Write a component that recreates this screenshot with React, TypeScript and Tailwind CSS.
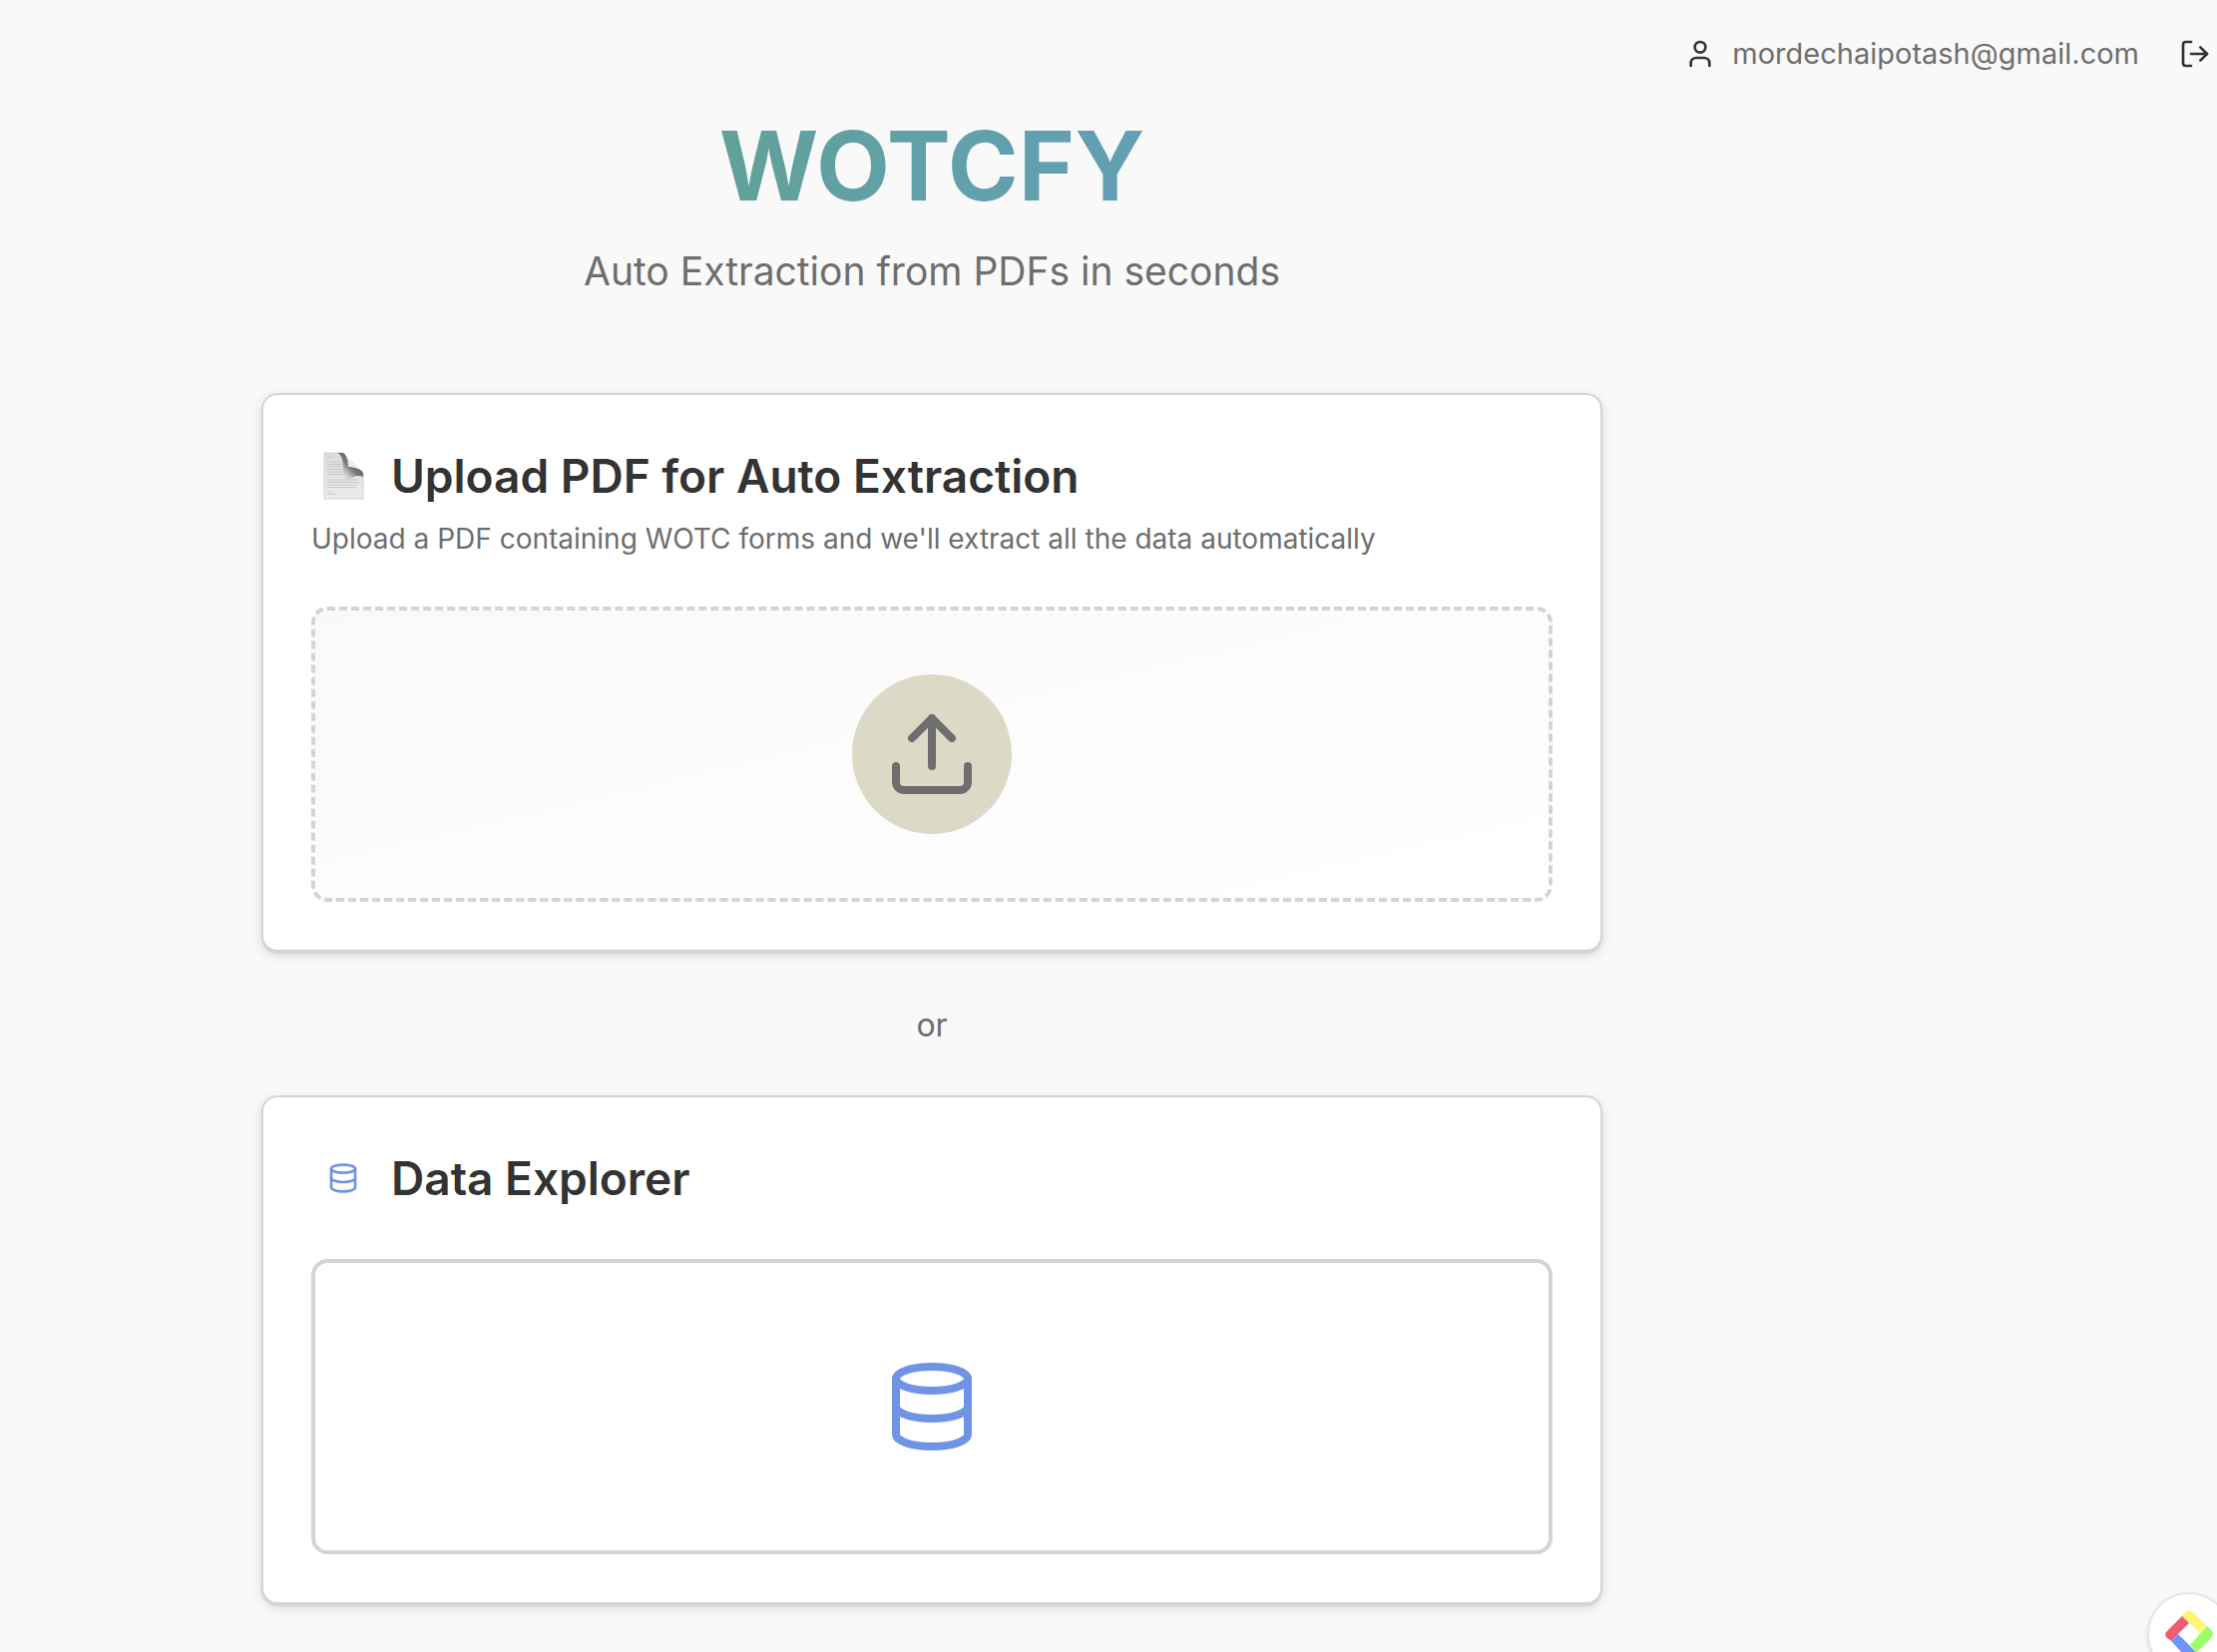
import type { ReactNode } from "react";
import { Database, LogOut, Upload, User } from "lucide-react";

function PageGlyph() {
  return (
    <svg width="48" height="48" viewBox="0 0 48 48" aria-hidden="true">
      <defs>
        <linearGradient id="sheet" x1="0" y1="0" x2="0" y2="1">
          <stop offset="0" stopColor="#dcdcdc" />
          <stop offset="1" stopColor="#ececec" />
        </linearGradient>
        <linearGradient id="shade" x1="1" y1="0" x2="0.1" y2="0.9">
          <stop offset="0.3" stopColor="#555555" />
          <stop offset="0.6" stopColor="#808080" />
          <stop offset="1" stopColor="#dcdcdc" stopOpacity="0" />
        </linearGradient>
        <linearGradient id="curl" x1="0" y1="1" x2="0.6" y2="0.4">
          <stop offset="0" stopColor="#cfcfcf" />
          <stop offset="1" stopColor="#f6f6f6" />
        </linearGradient>
      </defs>
      <path d="M5 1h18c4 1 6 5 6 14 8 0 14 3 15 7v25H5z" fill="url(#sheet)" stroke="#d2d2d2" />
      <path
        d="M8 5h7M8 10h15M8 12.500h15M8 15h15M8 17.500h16M8 20h16M8 22.500h17M8 28h31M8 30.500h31M8 33h31M8 35.500h29M8 40h6M8 42.500h10"
        stroke="#a8a8a8"
        strokeOpacity="0.45"
        fill="none"
      />
      <path d="M18 1h6c3 2 5 8 5 14 8 0 14 2 15 7v3c-5-2-10-1-14 3-5 1-6-3-6-10C24 9 23 3 18 1z" fill="url(#shade)" />
      <path d="M25 1.500c4 2 5 8 4 13.500 6 0 11 1 15 6C39 14 31 7 25 1.500z" fill="url(#curl)" />
    </svg>
  );
}

function Card({ icon, title, description, children }: { icon: ReactNode; title: string; description?: string; children: ReactNode }) {
  return (
    <section className="w-full rounded-2xl border-2 border-[#d4d4d4] bg-white p-12 shadow-[0_4px_12px_rgba(0,0,0,0.12),0_2px_2px_rgba(0,0,0,0.08)]">
      <div className="flex items-center gap-4">
        <span className="flex size-16 shrink-0 items-center justify-center">{icon}</span>
        <h2 className="text-[46px] leading-[66px] font-semibold text-[#333333]">{title}</h2>
      </div>
      {description && <p className="mt-[10px] text-[28px] leading-10 text-[#6e6e6e]">{description}</p>}
      <div className="mt-12">{children}</div>
    </section>
  );
}

export default function App() {
  return (
    <div className="relative min-h-screen overflow-hidden bg-[#f9f9f9] font-['Inter',sans-serif]">
      <header className="flex h-[108px] items-center justify-end gap-10 pr-[6px]">
        <div className="flex items-center gap-4">
          <User size={32} className="text-[#333333]" aria-hidden="true" />
          <span className="text-[29px] leading-10 text-[#6e6e6e]">mordechaipotash@gmail.com</span>
        </div>
        <button type="button" aria-label="Log out" className="text-[#333333]">
          <LogOut size={32} />
        </button>
      </header>

      <main className="mr-[354px] flex flex-col items-center pb-12">
        <div className="flex w-full max-w-[1344px] flex-col items-center">
          <h1 className="bg-linear-to-r from-[#61a199] to-[#639fb6] bg-clip-text text-[96px] leading-[116px] font-bold text-transparent">
            WOTCFY
          </h1>
          <p className="mt-5 mb-[94px] text-[39px] leading-[56px] text-[#6e6e6e]">Auto Extraction from PDFs in seconds</p>

          <Card
            icon={<PageGlyph />}
            title="Upload PDF for Auto Extraction"
            description="Upload a PDF containing WOTC forms and we'll extract all the data automatically"
          >
            <label className="flex cursor-pointer justify-center rounded-2xl border-4 border-dashed border-[#d4d4d4] bg-linear-to-br from-[#f9f9f9] to-white p-16">
              <input type="file" accept="application/pdf" aria-label="Upload PDF" className="sr-only" />
              <span className="rounded-full bg-[#dcd9c6] p-8 text-[#6e6e6e]">
                <Upload size={96} aria-hidden="true" />
              </span>
            </label>
          </Card>

          <p className="mt-[50px] mb-[46px] text-[32px] leading-[48px] text-[#6e6e6e]">or</p>

          <Card icon={<Database size={32} className="text-[#6f94e6]" aria-hidden="true" />} title="Data Explorer">
            <button
              type="button"
              aria-label="Open Data Explorer"
              className="flex w-full cursor-pointer justify-center rounded-2xl border-4 border-[#d4d4d4] bg-white p-24 text-[#6f94e6]"
            >
              <Database size={96} aria-hidden="true" />
            </button>
          </Card>
        </div>
      </main>

      <button
        type="button"
        aria-label="Open assistant"
        className="absolute -right-[14px] -bottom-6 flex size-[84px] items-center justify-center rounded-full border-2 border-[#e5e5ea] bg-white shadow-md"
      >
        <svg width="48" height="48" viewBox="0 0 48 48" className="shrink-0" aria-hidden="true">
          <path d="M17 6 20 2Q24-1 28 2L42 16 35 23z" fill="#fff575" />
          <path d="M42 16 46 20Q50 24 46 28L32 42 25 35z" fill="#9bff68" />
          <path d="M31 42 28 46Q24 49 20 46L6 31 13 24z" fill="#6d94fa" />
          <path d="M6 31 1 27Q-1 24 2 21L17 6 24 13z" fill="#ee5c75" />
        </svg>
      </button>
    </div>
  );
}
